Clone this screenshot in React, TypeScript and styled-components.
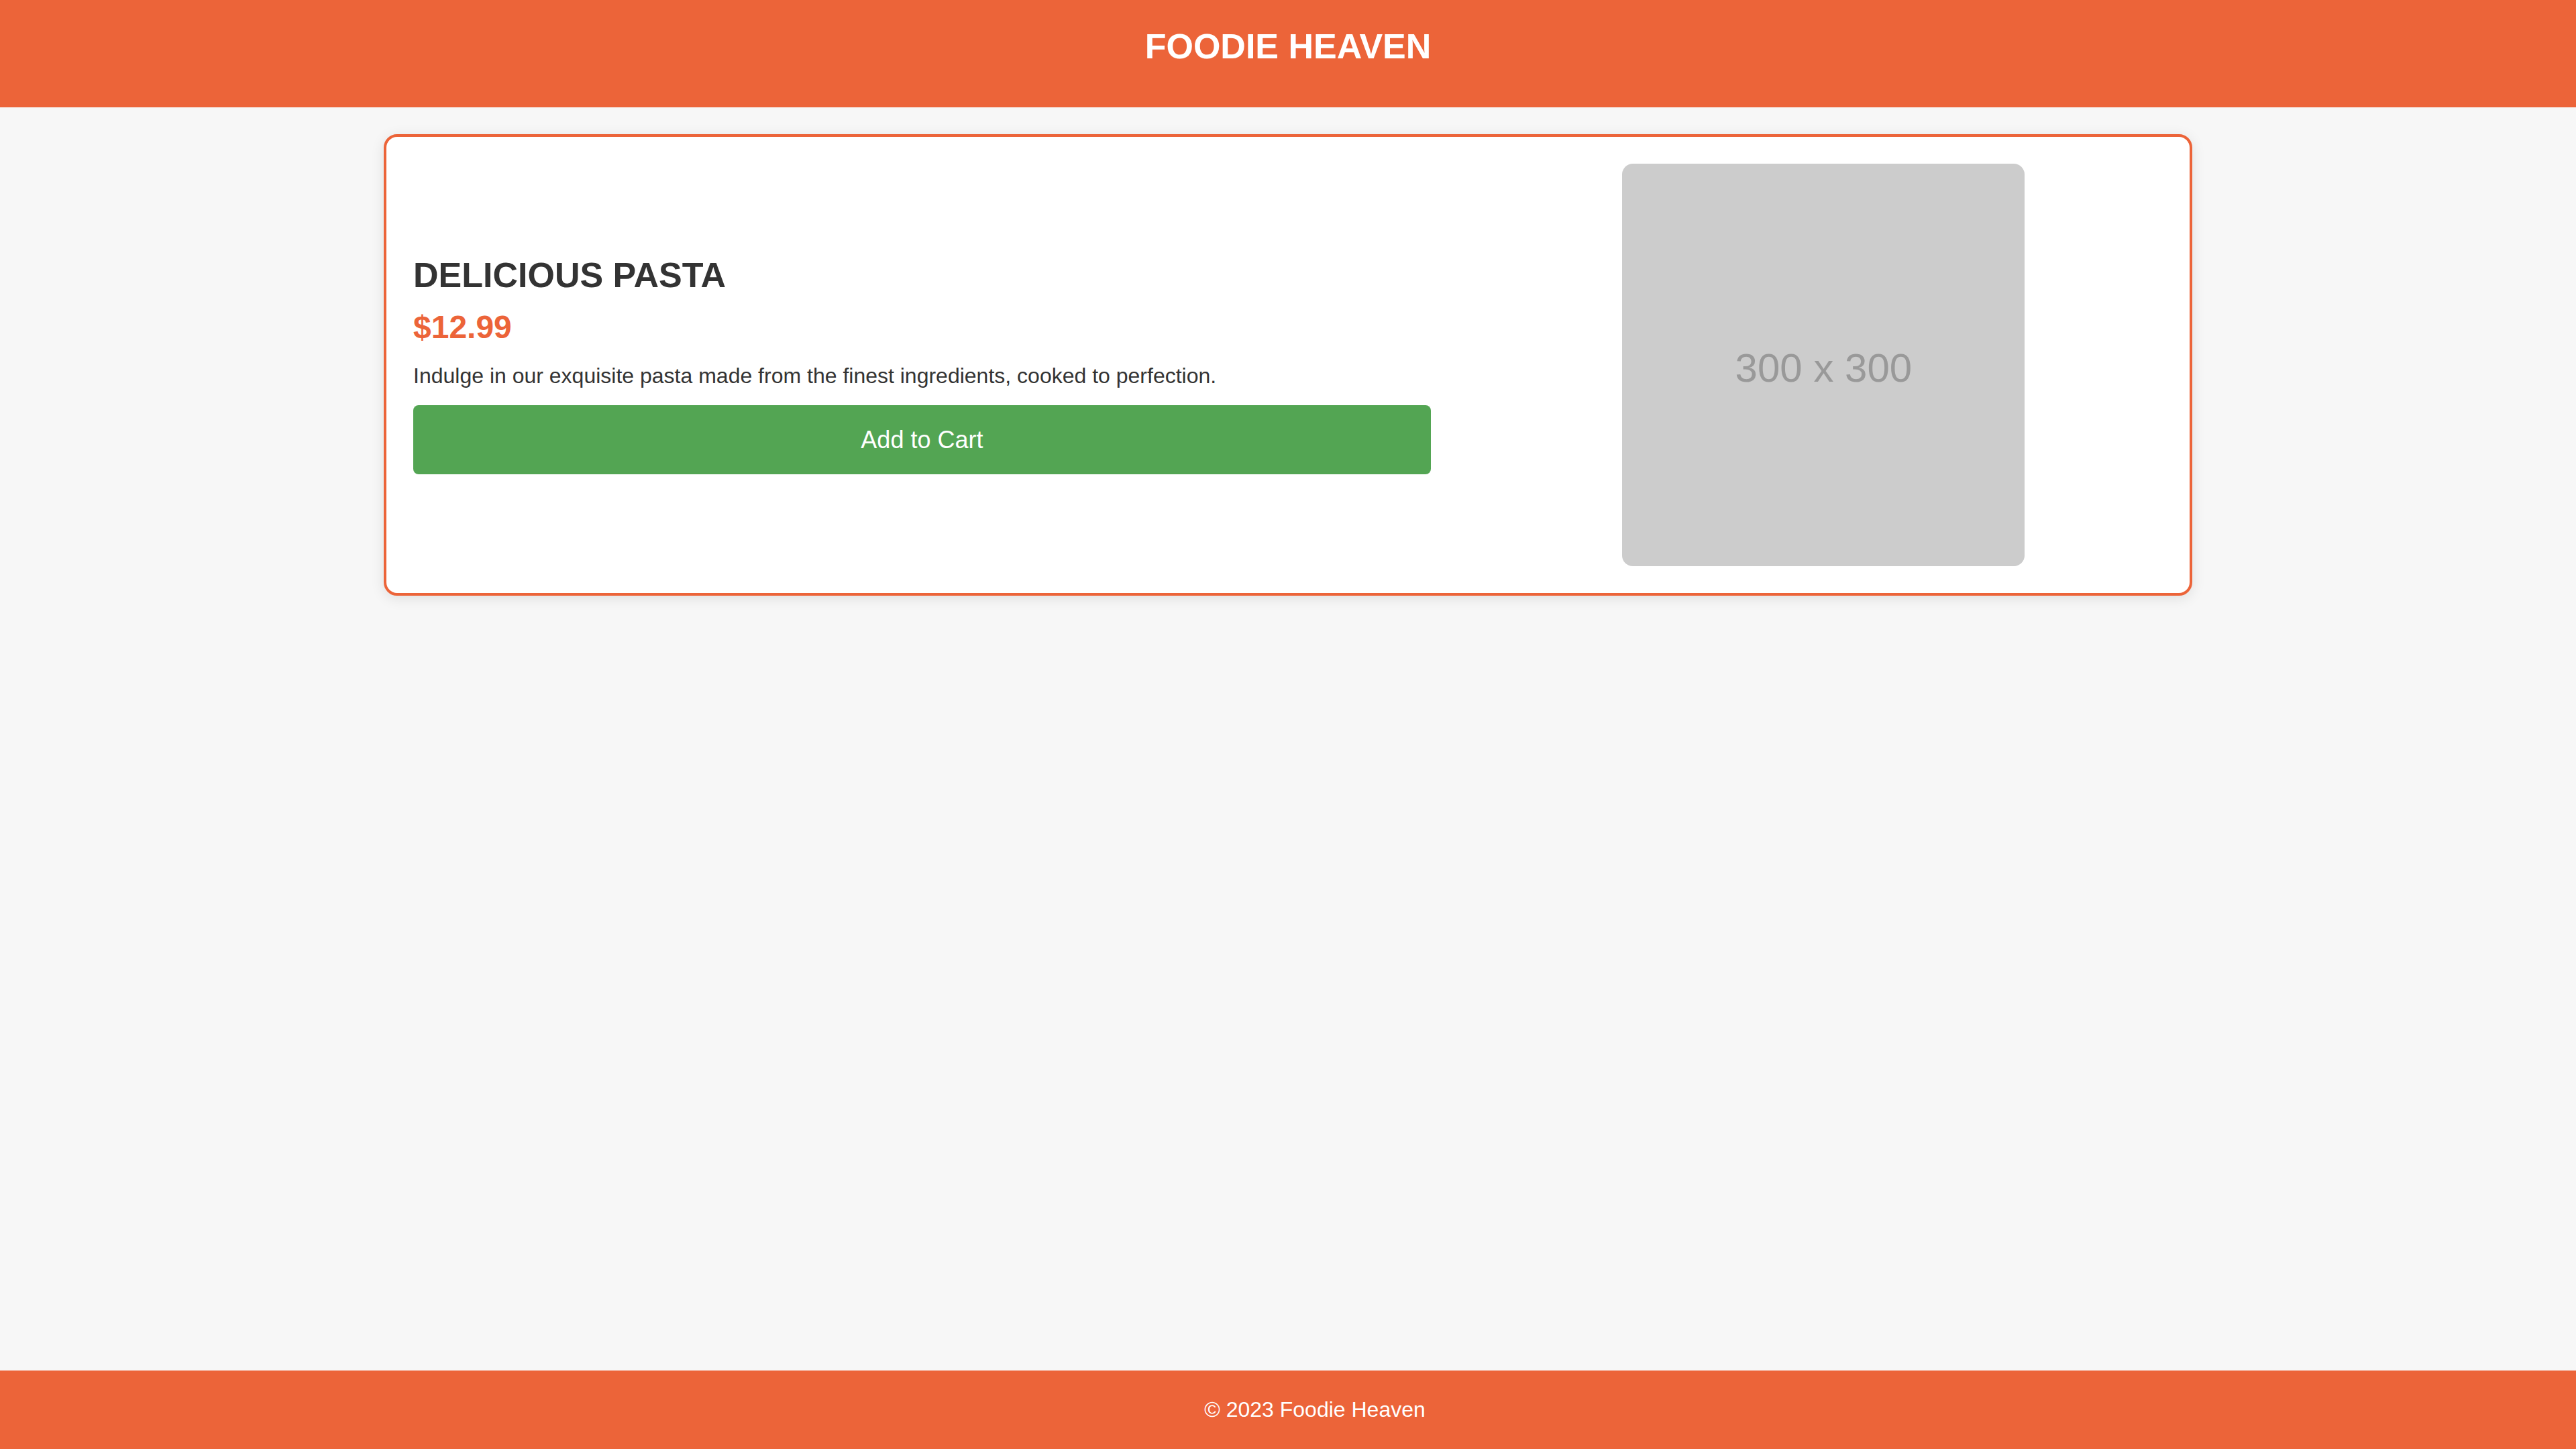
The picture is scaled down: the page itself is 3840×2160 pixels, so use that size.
import styled, { createGlobalStyle } from "styled-components";

const Orange = "#ec6439";
const Green = "#53a553";
const Ink = "#333333";

const GlobalStyle = createGlobalStyle`
  html, body {
    margin: 0;
    padding: 0;
    background: #f7f7f7;
    font-family: "Liberation Sans", Arial, Helvetica, sans-serif;
  }
  * {
    box-sizing: border-box;
  }
`;

const Page = styled.div`
  min-height: 100vh;
  display: flex;
  flex-direction: column;
`;

const Header = styled.header`
  background: ${Orange};
  height: 160px;
  padding-top: 40px;
  text-align: center;
`;

const SiteTitle = styled.h1`
  margin: 0;
  color: #fff;
  font-size: 52px;
  font-weight: 700;
  line-height: 1.15;
`;

const Main = styled.main`
  flex: 1;
  padding: 40px 0;
`;

const ProductCard = styled.section`
  max-width: 2696px;
  margin: 0 auto;
  padding: 40px;
  display: flex;
  align-items: center;
  gap: 80px;
  background: #fff;
  border: 4px solid ${Orange};
  border-radius: 20px;
  box-shadow: 0 4px 20px rgba(0, 0, 0, 0.1);
`;

const Details = styled.div`
  flex: 3;
  display: flex;
  flex-direction: column;
`;

const ProductName = styled.h2`
  margin: 0 0 19px;
  color: ${Ink};
  font-size: 52px;
  font-weight: 700;
  line-height: 1.15;
  text-transform: uppercase;
`;

const Price = styled.div`
  margin-bottom: 27px;
  color: ${Orange};
  font-size: 48px;
  font-weight: 700;
  line-height: 1.15;
`;

const Description = styled.p`
  margin: 0 0 25px;
  color: ${Ink};
  font-size: 32px;
  line-height: 1.15;
`;

const CartButton = styled.button`
  width: 100%;
  padding: 31px 0;
  border: none;
  border-radius: 8px;
  background: ${Green};
  color: #fff;
  font-family: inherit;
  font-size: 36px;
  line-height: 1.15;
  cursor: pointer;
`;

const ImageColumn = styled.div`
  flex: 2;
  display: flex;
  justify-content: center;
`;

const Placeholder = styled.div`
  width: 600px;
  height: 600px;
  padding-top: 8px;
  border-radius: 16px;
  background: #cccccc;
  color: #999999;
  font-size: 60px;
  display: flex;
  align-items: center;
  justify-content: center;
`;

const Footer = styled.footer`
  background: ${Orange};
  padding: 40px 0 40px 80px;
  text-align: center;
  color: #fff;
  font-size: 32px;
  line-height: 1.15;
`;

const App = () => {
  return (
    <Page>
      <GlobalStyle />
      <Header>
        <SiteTitle>FOODIE HEAVEN</SiteTitle>
      </Header>
      <Main>
        <ProductCard>
          <Details>
            <ProductName>Delicious Pasta</ProductName>
            <Price>$12.99</Price>
            <Description>
              Indulge in our exquisite pasta made from the finest ingredients,
              cooked to perfection.
            </Description>
            <CartButton>Add to Cart</CartButton>
          </Details>
          <ImageColumn>
            <Placeholder>300 x 300</Placeholder>
          </ImageColumn>
        </ProductCard>
      </Main>
      <Footer>© 2023 Foodie Heaven</Footer>
    </Page>
  );
};

export default App;
